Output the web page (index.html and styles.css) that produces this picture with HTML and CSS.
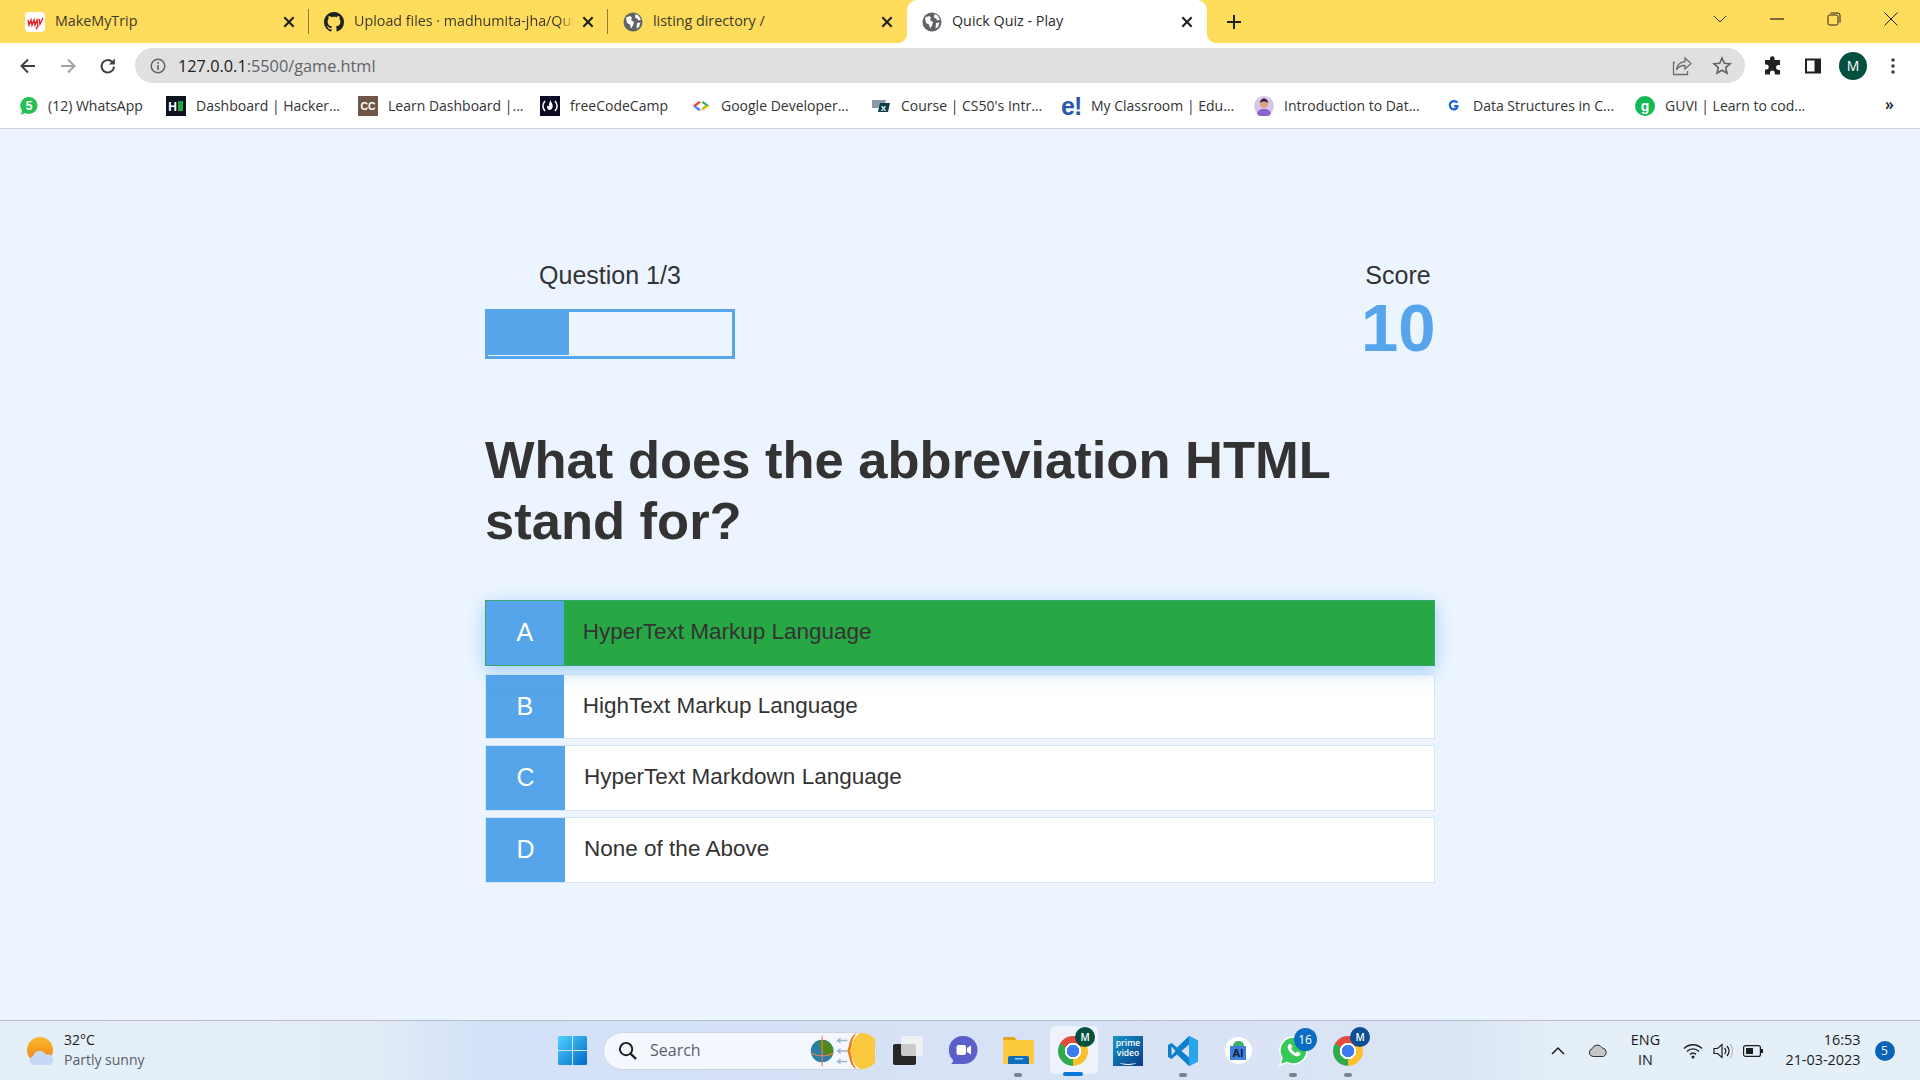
FILE: index.html
```html
<!DOCTYPE html>
<html lang="en">
<head>
  <meta charset="UTF-8" />
  <title>Quick Quiz - Play</title>
  <link rel="stylesheet" href="styles.css">
</head>
<body>
  <svg class="defs" width="0" height="0">
    <symbol id="globe" viewBox="0 0 20 20">
      <circle cx="10" cy="10" r="9.5" fill="#5f6368"/>
      <path d="M3 5.500 7 4l2 1.500-1 2.500 3 2-1 3.500-2 3-1-4-3-1.500zM12.500 2l3 1.500 2.500 4-2.500 1-1.500-2-2-1zM14 11l3.500-.5-1.500 4.500-2.500 1.500z" fill="#fff"/>
    </symbol>
    <symbol id="x" viewBox="0 0 12 12">
      <path d="M2 2l8 8M10 2l-8 8" stroke="#202124" stroke-width="1.800" fill="none"/>
    </symbol>
  </svg>

  <div class="tabstrip">
    <div class="tab">
      <svg class="favicon" viewBox="0 0 20 20"><rect width="20" height="20" rx="4" fill="#fff"/><path d="M3 8l1 5 2-5 1 5 2-5 1 5 2-5 1 6-2 3M14 7l1 5 3-6" stroke="#e5232c" stroke-width="1.400" fill="none"/></svg>
      <span class="tab-title">MakeMyTrip</span>
      <svg class="tab-close"><use href="#x"/></svg>
    </div>
    <div class="tab">
      <svg class="favicon" viewBox="0 0 16 16"><path fill="#202124" d="M8 0C3.580 0 0 3.580 0 8c0 3.540 2.290 6.530 5.470 7.590.4.070.55-.17.55-.38 0-.19-.01-.82-.01-1.490-2.010.37-2.530-.49-2.690-.94-.09-.23-.48-.94-.82-1.130-.28-.15-.68-.52-.01-.53.630-.01 1.080.58 1.230.82.720 1.210 1.870.87 2.330.66.070-.52.280-.87.510-1.070-1.780-.2-3.640-.89-3.640-3.950 0-.87.310-1.590.820-2.150-.08-.2-.36-1.020.08-2.120 0 0 .67-.21 2.200.82.640-.18 1.320-.27 2-.27s1.360.09 2 .27c1.530-1.040 2.200-.82 2.200-.82.440 1.100.16 1.920.08 2.120.51.560.820 1.270.820 2.150 0 3.070-1.870 3.750-3.650 3.950.29.250.54.730.54 1.480 0 1.070-.01 1.930-.01 2.200 0 .21.150.46.550.38A8.010 8.010 0 0 0 16 8c0-4.420-3.580-8-8-8z"/></svg>
      <span class="tab-title tab-fade">Upload files · madhumita-jha/Qui</span>
      <svg class="tab-close"><use href="#x"/></svg>
    </div>
    <div class="tab">
      <svg class="favicon"><use href="#globe"/></svg>
      <span class="tab-title">listing directory /</span>
      <svg class="tab-close"><use href="#x"/></svg>
    </div>
    <div class="tab active">
      <svg class="favicon"><use href="#globe"/></svg>
      <span class="tab-title">Quick Quiz - Play</span>
      <svg class="tab-close"><use href="#x"/></svg>
    </div>
    <svg class="new-tab" viewBox="0 0 16 16"><path d="M8 1v14M1 8h14" stroke="#202124" stroke-width="2"/></svg>
    <div class="window-controls">
      <svg class="win-btn chevron" viewBox="0 0 14 14"><path d="M1 4l6 6 6-6" stroke="#333" fill="none"/></svg>
      <svg class="win-btn" viewBox="0 0 14 14"><path d="M0 7h14" stroke="#222" stroke-width="1.200"/></svg>
      <svg class="win-btn" viewBox="0 0 14 14"><rect x="1" y="3" width="10" height="10" rx="1.500" stroke="#222" fill="none"/><path d="M3.500 1H11a2 2 0 0 1 2 2v7.500" stroke="#222" fill="none"/></svg>
      <svg class="win-btn" viewBox="0 0 14 14"><path d="M.5.5l13 13M13.500.5l-13 13" stroke="#222"/></svg>
    </div>
  </div>

  <div class="toolbar">
    <div class="nav-btn"><svg viewBox="0 0 18 18"><path d="M16 9H3M9 2.500 2.500 9 9 15.500" stroke="#3c4043" stroke-width="2" fill="none"/></svg></div>
    <div class="nav-btn"><svg viewBox="0 0 18 18"><path d="M2 9h13M9 2.500 15.500 9 9 15.500" stroke="#a2a3a5" stroke-width="2" fill="none"/></svg></div>
    <div class="nav-btn"><svg viewBox="0 0 18 18"><path d="M15 9.500a6.200 6.200 0 1 1-1.800-4.600" stroke="#3c4043" stroke-width="2" fill="none"/><path d="M15.800 1.500v6h-6z" fill="#3c4043"/></svg></div>
    <div class="omnibox">
      <svg class="info" viewBox="0 0 16 16"><circle cx="8" cy="8" r="6.800" stroke="#5f6368" stroke-width="1.500" fill="none"/><path d="M8 7v5M8 4v1.800" stroke="#5f6368" stroke-width="1.600"/></svg>
      <span class="url"><b>127.0.0.1</b>:5500/game.html</span>
      <svg class="omni-icon" viewBox="0 0 20 20"><path d="M13 2l6 5.500-6 5.500V9.500C8.500 9.500 6 11 4.500 14c.5-5 3.500-8 8.500-8.500zM3 6.500H1.500v12h14V15" stroke="#6c6e70" stroke-width="1.300" fill="none"/></svg>
      <svg class="omni-icon" viewBox="0 0 20 20"><path d="M10 2l2.300 5.300 5.700.5-4.300 3.800 1.300 5.600L10 14.200l-5 3 1.300-5.600L2 7.800l5.700-.5z" stroke="#5f6368" stroke-width="1.600" fill="none"/></svg>
    </div>
    <div class="nav-btn"><svg viewBox="0 0 20 20"><path fill="#202124" d="M7 2.500a2.300 2.300 0 0 1 4.600 0V4H17v5h-1.500a2.500 2.500 0 0 0 0 5H17v4.500H11.800V17a2.400 2.400 0 0 0-4.800 0v1.500H2V13.500h1.200a2.500 2.500 0 0 0 0-5H2V4h5z"/></svg></div>
    <div class="nav-btn"><svg viewBox="0 0 18 18"><rect x="1" y="1.500" width="16" height="15" fill="#202124"/><rect x="3" y="3.500" width="7.500" height="11" fill="#fff"/></svg></div>
    <div class="nav-btn"><span class="avatar">M</span></div>
    <div class="nav-btn"><svg viewBox="0 0 18 18"><circle cx="9" cy="3" r="1.800" fill="#3c4043"/><circle cx="9" cy="9" r="1.800" fill="#3c4043"/><circle cx="9" cy="15" r="1.800" fill="#3c4043"/></svg></div>
  </div>

  <div class="bookmarks">
    <div class="bookmark"><svg class="wa-icon" viewBox="0 0 18 20"><path d="M9 1a8.500 8.500 0 0 1 0 17c-1.500 0-2.900-.4-4-1L.8 19l1.400-4.200A8.500 8.500 0 0 1 9 1z" fill="#25c253"/><text x="9" y="14" class="fav-text" fill="#fff" font-size="12">5</text></svg><span>(12) WhatsApp</span></div>
    <div class="bookmark"><svg viewBox="0 0 20 20"><rect width="20" height="20" fill="#0e141e"/><text x="6.500" y="14.500" class="fav-text" fill="#fff" font-size="12">H</text><rect x="12" y="5" width="5" height="10" fill="#1ba94c"/></svg><span>Dashboard | Hacker...</span></div>
    <div class="bookmark"><svg viewBox="0 0 20 20"><rect width="20" height="20" fill="#6f5646"/><text x="10" y="14" class="fav-text" fill="#fff" font-size="10.500">CC</text></svg><span>Learn Dashboard |...</span></div>
    <div class="bookmark"><svg viewBox="0 0 20 20"><rect width="20" height="20" fill="#0a0a23"/><path d="M5 5c-2.500 3-2.500 7 0 10M15 5c2.500 3 2.500 7 0 10" stroke="#fff" stroke-width="1.500" fill="none"/><path d="M10.500 4c.5 3 3 4 2 7.500-.5 1.500-1.500 2-2.500 2.500-2 0-3.500-2-2.700-4.500.5 1 1.200 1 1.500.5.500-1.500.5-4 1.700-6z" fill="#fff"/></svg><span>freeCodeCamp</span></div>
    <div class="bookmark"><svg viewBox="0 0 20 20"><path d="M8 5 2 9.500l2 1.500L10 6.500z" fill="#ea4335"/><path d="M2 10.500 8 15l2-1.500-4-3z" fill="#4285f4"/><path d="M12 5l6 4.500-6 4.500-1.500-1.500 4-3-4-3z" fill="#34a853"/><path d="M18 10l-6 4.500-1.500-1.500 5-3.500z" fill="#fbbc04"/></svg><span>Google Developer...</span></div>
    <div class="bookmark"><svg viewBox="0 0 20 20"><path d="M1 4h14l-2 8H1z" fill="#8c9aa6"/><path d="M9 7h10l-2 9H7z" fill="#0d3b46"/><text x="12.500" y="15" class="fav-text" fill="#fff" font-size="8">X</text></svg><span>Course | CS50's Intr...</span></div>
    <div class="bookmark"><b class="edu-logo">e!</b><span>My Classroom | Edu...</span></div>
    <div class="bookmark"><svg viewBox="0 0 20 20"><circle cx="10" cy="10" r="10" fill="#d5c5e8"/><path d="M3 18c1-4 3-5 7-5s6 1 7 5a10 10 0 0 1-14 0z" fill="#8a63d2"/><circle cx="10" cy="8" r="4" fill="#d9a184"/><path d="M6 7c0-6 8-6 8 0-2-2-6-2-8 0z" fill="#2c2230"/></svg><span>Introduction to Dat...</span></div>
    <div class="bookmark"><svg class="g-icon" viewBox="0 0 20 20"><path d="M16 5.500C13 2 7 2.500 5 6.500c-2 4 .500 9.500 5.500 9.500 3 0 5-1.500 5.500-5h-5" stroke="#1a62d6" stroke-width="3.500" fill="none"/></svg><span>Data Structures in C...</span></div>
    <div class="bookmark"><svg viewBox="0 0 20 20"><circle cx="10" cy="10" r="10" fill="#13b955"/><text x="10" y="15" class="fav-text" fill="#fff" font-size="14">g</text></svg><span>GUVI | Learn to cod...</span></div>
    <div class="more">»</div>
  </div>

  <main class="page">
    <div class="game">
      <div class="hud">
        <div class="hud-question">
          <p class="hud-label">Question 1/3</p>
          <div class="progress"><div class="progress-fill"></div></div>
        </div>
        <div class="hud-score">
          <p class="hud-label">Score</p>
          <p class="score">10</p>
        </div>
      </div>
      <h1 class="question">What does the abbreviation HTML stand for?</h1>
      <div class="choice correct"><span class="prefix">A</span><span class="choice-text">HyperText Markup Language</span></div>
      <div class="choice second"><span class="prefix">B</span><span class="choice-text">HighText Markup Language</span></div>
      <div class="choice"><span class="prefix">C</span><span class="choice-text">HyperText Markdown Language</span></div>
      <div class="choice"><span class="prefix">D</span><span class="choice-text">None of the Above</span></div>
    </div>
  </main>

  <footer class="taskbar">
    <div class="weather">
      <svg class="weather-icon" viewBox="0 0 28 28"><defs><linearGradient id="sun" x1="0" y1="0" x2="0" y2="1"><stop offset="0" stop-color="#fdb92e"/><stop offset="1" stop-color="#ee7f14"/></linearGradient></defs><circle cx="13" cy="13" r="13" fill="url(#sun)"/><path d="M7 28a4.500 4.500 0 0 1-1-8.800 7 7 0 0 1 13-1.500 5.200 5.200 0 0 1 4 10.300z" fill="#c5d8f5"/></svg>
      <div class="weather-text"><span class="temp">32°C</span><span class="sky">Partly sunny</span></div>
    </div>
    <div class="dock">
      <div class="slot">
        <svg width="29" height="29" viewBox="0 0 29 29"><defs><linearGradient id="win" x1="0" y1="0" x2="1" y2="1"><stop offset="0" stop-color="#4fd2ff"/><stop offset="1" stop-color="#0069c8"/></linearGradient></defs><path fill="url(#win)" d="M0 1.500A1.500 1.500 0 0 1 1.500 0H14v14H0zM15 0h12.500A1.500 1.500 0 0 1 29 1.500V14H15zM0 15h14v14H1.500A1.500 1.500 0 0 1 0 27.500zM15 15h14v12.500a1.500 1.500 0 0 1-1.500 1.500H15z"/></svg>
      </div>
      <div class="search">
        <svg class="search-icon" viewBox="0 0 20 20"><circle cx="8.500" cy="8.500" r="6.500" stroke="#1c1c1c" stroke-width="2" fill="none"/><path d="M13.500 13.500 19 19" stroke="#1c1c1c" stroke-width="2.400"/></svg>
        <span class="search-text">Search</span>
        <svg class="search-art" viewBox="0 0 68 38"><circle cx="12.500" cy="19" r="12" fill="#2a7fa8"/><path d="M10 8c6-2 12 2 14 9 1 4-2 9-5 8-2-3-6-2-7-6-1-3-4-6-2-11z" fill="#4c8a1e"/><path d="M12.500 3v32M.5 21c7 4 17 4 24 0" stroke="#ef7a5a" stroke-width="1.200" fill="none"/><path d="M39 8H29l3-2.500M29 8l3 2.500M39 19H29l3-2.500M29 19l3 2.500M39 30H29l3-2.500M29 30l3 2.500" stroke="#9bb4cc" stroke-width="1.500" fill="none"/><path d="M54 0a19 19 0 0 1 0 38c-4 0-9-6-10-14l-2-5 2-5c1-8 6-14 10-14z" fill="#fcc93e"/><path d="M49 0c-3 3-5 8-5.500 14L42 19l1.500 5c.5 6 2.500 11 5.500 14-5-2-7-7-8-13l-2-6 2-6c1-6 3-11 8-13z" fill="#ec7c14"/></svg>
      </div>
      <div class="slot">
        <svg width="30" height="29" viewBox="0 0 30 29"><rect y="8" width="23" height="21" rx="2" fill="#262626"/><rect x="8" y="0" width="22" height="20" rx="2" fill="#f4f4f4" fill-opacity=".8"/></svg>
      </div>
      <div class="slot">
        <svg width="29" height="29" viewBox="0 0 29 29"><path d="M14.500 0a14 14 0 0 1 0 28H2c1.500-1 2.500-2.500 2-4A14 14 0 0 1 14.500 0z" fill="#5b5fc7"/><rect x="7.500" y="9" width="9.500" height="10" rx="2" fill="#fff"/><path d="M18 12l4-2.500v9L18 16z" fill="#fff"/></svg>
      </div>
      <div class="slot running">
        <svg width="31" height="27" viewBox="0 0 31 27"><path d="M0 2a2 2 0 0 1 2-2h9l3 3H0z" fill="#e3a516"/><rect y="3" width="31" height="24" rx="2" fill="#fdc93d"/><path d="M5 27v-6a2 2 0 0 1 2-2h17a2 2 0 0 1 2 2v6z" fill="#0f6cbd"/><rect x="12" y="21" width="8" height="1.500" fill="#8fd0f5"/></svg>
      </div>
      <div class="slot active-app">
        <div class="chrome"><span class="chrome-badge">M</span></div>
      </div>
      <div class="slot">
        <div class="prime"><span>prime</span><span>video</span><i class="prime-smile"></i></div>
      </div>
      <div class="slot running">
        <svg width="30" height="30" viewBox="0 0 30 30"><path d="M21 0l9 4.500v21L21 30 9 18.500 3.500 23 0 21V9l3.500-2L9 11.500z" fill="#0f7fcc"/><path d="M21 0l9 4.500v21L21 30z" fill="#28a5ec"/><path d="M21 8.500l-7.500 6.500 7.500 6.500z" fill="#d8e2f5"/><path d="M3.500 10.500 7.500 15l-4 4.500z" fill="#d8e2f5"/></svg>
      </div>
      <div class="slot">
        <div class="ai-app"><span class="ai-box">AI</span></div>
      </div>
      <div class="slot running">
        <div class="wa-wrap">
          <svg width="29" height="30" viewBox="0 0 29 30"><path d="M14.500 1a13.500 13.500 0 0 1 0 27c-2.300 0-4.500-.6-6.300-1.600L1 29l2-7.300A13.500 13.500 0 0 1 14.500 1z" fill="#38c759" stroke="#fff" stroke-width="1.500"/><path d="M10 8c-2 2-1.500 5 1 8s6 5 8.500 4c1.500-.5 2.500-2.500 2-3l-3-1.500-1.500 1.500c-2-.5-4-2.500-5-5l1.500-1.500L11.500 8z" fill="#fff"/></svg>
          <span class="wa-badge">16</span>
        </div>
      </div>
      <div class="slot running">
        <div class="chrome"><span class="chrome-badge blue">M</span></div>
      </div>
    </div>
    <div class="tray">
      <svg class="tray-chevron" viewBox="0 0 14 9"><path d="M1 8l6-6 6 6" stroke="#1c1c1c" stroke-width="1.500" fill="none"/></svg>
      <svg class="tray-cloud" viewBox="0 0 20 13"><path d="M5 12.500a4 4 0 0 1-.8-7.800 5.500 5.500 0 0 1 10-.8 4.500 4.500 0 0 1 1.300 8.600z" fill="#c4c6c8" stroke="#333" stroke-width="1"/></svg>
      <div class="lang"><span>ENG</span><span>IN</span></div>
      <svg class="tray-wifi" viewBox="0 0 20 16"><path d="M1 5.500c5-5 13-5 18 0M4 8.500c3.500-3.500 8.500-3.500 12 0M7 11.500c1.800-1.800 4.200-1.800 6 0" stroke="#1c1c1c" stroke-width="1.300" fill="none"/><circle cx="10" cy="14" r="1.500" fill="#1c1c1c"/></svg>
      <svg class="tray-sound" viewBox="0 0 20 16"><path d="M1 5.500h3.500L9 1.500v13l-4.500-4H1z" stroke="#1c1c1c" stroke-width="1.200" fill="none"/><path d="M11.500 5c1.500 1.700 1.500 4.300 0 6M14 3c2.500 3 2.500 7 0 10" stroke="#1c1c1c" stroke-width="1.200" fill="none"/><path d="M17 1c3.500 4 3.500 10 0 14" stroke="#b8bec6" stroke-width="1.200" fill="none"/></svg>
      <svg class="tray-battery" viewBox="0 0 20 12"><rect x=".6" y=".6" width="16.800" height="10.800" rx="2" stroke="#1c1c1c" stroke-width="1.200" fill="none"/><rect x="3" y="3" width="7" height="6" fill="#1c1c1c"/><rect x="18" y="4" width="2" height="4" fill="#1c1c1c"/></svg>
      <div class="clock"><span>16:53</span><span>21-03-2023</span></div>
      <span class="notify">5</span>
    </div>
  </footer>
</body>
</html>
```

FILE: styles.css
```css
* {
  box-sizing: border-box;
}
html, body {
  height: 100%;
}
body {
  margin: 0;
  display: flex;
  flex-direction: column;
  height: 1080px;
  overflow: hidden;
  font-family: "Liberation Sans", Arial, sans-serif;
  background: #ecf5ff;
}
.defs {
  position: absolute;
}
svg {
  display: block;
}
.fav-text {
  font-family: "Liberation Sans", Arial, sans-serif;
  font-weight: bold;
  text-anchor: middle;
}

/* browser tabs */
.tabstrip {
  flex: none;
  height: 43px;
  display: flex;
  align-items: center;
  padding-left: 10px;
  background: #ffdc5b;
  font-family: "Open Sans", sans-serif;
}
.tab {
  position: relative;
  width: 299px;
  height: 43px;
  display: flex;
  align-items: center;
  padding: 0 13px 0 15px;
  font-size: 14.300px;
  color: #3c3a2c;
}
.tab + .tab::before {
  content: "";
  position: absolute;
  left: -1px;
  top: 9px;
  height: 25px;
  border-left: 1px solid #8e7e3e;
}
.tab .favicon {
  flex: none;
  width: 20px;
  height: 20px;
  margin-right: 10px;
}
.tab-title {
  flex: 1;
  white-space: nowrap;
  overflow: hidden;
  margin-top: -2px;
}
.tab-fade {
  -webkit-mask-image: linear-gradient(to right, #000 93%, transparent);
  mask-image: linear-gradient(to right, #000 93%, transparent);
}
.tab-close {
  flex: none;
  width: 14px;
  height: 14px;
  margin-left: 7px;
}
.tab.active {
  width: 300px;
  background: #fff;
  border-radius: 10px 10px 0 0;
  color: #2a2a2a;
}
.tab.active::before {
  display: none;
}
.tab.active::after {
  content: "";
  position: absolute;
  left: -10px;
  right: -10px;
  bottom: 0;
  height: 10px;
  z-index: 0;
  background:
    radial-gradient(circle at 0 0, #ffdc5b 10px, #fff 10.500px) left / 10px 10px no-repeat,
    radial-gradient(circle at 100% 0, #ffdc5b 10px, #fff 10.500px) right / 10px 10px no-repeat;
}
.new-tab {
  width: 16px;
  height: 16px;
  margin-left: 19px;
}
.window-controls {
  margin-left: auto;
  display: flex;
  align-items: center;
  height: 100%;
  padding-right: 22px;
  padding-bottom: 6px;
}
.win-btn {
  width: 14px;
  height: 14px;
  margin-left: 43px;
}

/* address bar */
.toolbar {
  flex: none;
  height: 43px;
  display: flex;
  align-items: center;
  padding-left: 8px;
  padding-top: 2px;
  background: #fff;
}
.nav-btn {
  flex: none;
  width: 40px;
  height: 36px;
  display: flex;
  align-items: center;
  justify-content: center;
}
.nav-btn svg {
  width: 18px;
  height: 18px;
}
.nav-btn:nth-child(5) svg {
  width: 20px;
  height: 20px;
}
.omnibox {
  flex: none;
  width: 1610px;
  height: 35px;
  margin: 0 8px 0 7px;
  display: flex;
  align-items: center;
  padding: 0 13px 0 15px;
  border-radius: 18px;
  background: #e0e0e0;
}
.info {
  width: 16px;
  height: 16px;
  margin-right: 12px;
}
.url {
  flex: 1;
  font: 16.300px "Open Sans", sans-serif;
  color: #5f6368;
}
.url b {
  font-weight: normal;
  color: #202124;
}
.omni-icon {
  width: 20px;
  height: 20px;
  margin-left: 20px;
}
.avatar {
  width: 28px;
  height: 28px;
  border-radius: 50%;
  background: #03503e;
  color: #fff;
  font: 14px/28px "Open Sans", sans-serif;
  text-align: center;
}

/* bookmarks */
.bookmarks {
  flex: none;
  height: 43px;
  display: grid;
  grid-template-columns: 146px 192px 182px 151px 180px 190px 193px 193px 188px 250px 1fr;
  align-items: center;
  padding-left: 20px;
  padding-bottom: 3px;
  background: #fff;
  border-bottom: 1px solid #cdd5dc;
  font: 14px "Open Sans", sans-serif;
  color: #333;
}
.bookmark {
  display: flex;
  align-items: center;
  white-space: nowrap;
}
.bookmark svg {
  flex: none;
  width: 20px;
  height: 20px;
  margin-right: 10px;
}
.bookmark .wa-icon {
  width: 18px;
}
.bookmark .g-icon {
  width: 13px;
  height: 13px;
  margin-right: 13px;
}
.edu-logo {
  flex: none;
  width: 21px;
  margin-right: 9px;
  font: bold 25px/20px "Liberation Sans", sans-serif;
  letter-spacing: -1px;
  color: #2a5aa6;
}
.more {
  font-size: 16px;
  font-weight: 600;
  color: #202124;
  line-height: 1;
  margin-top: -4px;
}

/* quiz */
.page {
  flex: 1;
  padding-top: 131px;
}
.game {
  width: 950px;
  margin: 0 auto;
}
.hud {
  display: flex;
  justify-content: space-between;
  height: 71px;
}
.hud-label {
  margin: 0;
  font-size: 25px;
  line-height: 30px;
  color: #333;
  text-align: center;
}
.hud-question {
  width: 250px;
  height: 99px;
}
.progress {
  height: 50px;
  margin-top: 19px;
  border: 3px solid #56a5eb;
}
.progress-fill {
  width: 33.300%;
  height: 43px;
  background: #56a5eb;
}
.hud-score {
  width: 74px;
  height: 99px;
}
.score {
  margin: 0;
  font-size: 67px;
  font-weight: bold;
  line-height: 76px;
  text-align: center;
  color: #56a5eb;
}
.question {
  margin: 98px 0 50px;
  font-size: 52.500px;
  line-height: 61px;
  font-weight: bold;
  color: #333;
}
.choice {
  display: flex;
  height: 66px;
  margin-bottom: 6px;
  border: 1px solid rgba(86, 165, 235, 0.25);
  background: #fff;
  font-size: 22.500px;
  color: #333;
}
.choice.second {
  height: 65px;
  margin-top: 7px;
}
.prefix {
  display: flex;
  align-items: center;
  padding: 0 30.500px 1px;
  background: #56a5eb;
  color: #fff;
  font-size: 25px;
}
.choice-text {
  display: flex;
  align-items: center;
  padding: 0 0 2px 19px;
}
.choice.correct {
  background: #28a745;
  transform: translateY(-1px);
  box-shadow: 0 5px 17px rgba(86, 165, 235, 0.5);
  position: relative;
}

/* windows taskbar */
.taskbar {
  flex: none;
  height: 60px;
  display: flex;
  align-items: center;
  border-top: 1px solid #b5bcc8;
  background: linear-gradient(to right, #e4eff7 0, #e2edf7 370px, #d4e1f8 480px, #d8e2f5 1100px, #dae5f5 1450px, #e4eff8 1560px);
  font-family: "Open Sans", sans-serif;
}
.weather {
  flex: none;
  width: 544.500px;
  display: flex;
  align-items: center;
  padding-left: 27px;
}
.weather-icon {
  width: 28px;
  height: 28px;
  margin-right: 9px;
}
.weather-text {
  display: flex;
  flex-direction: column;
  margin-top: -2px;
  font-size: 14px;
  line-height: 20px;
  color: #1b1b1b;
}
.sky {
  color: #5a6068;
}
.dock {
  flex: none;
  display: flex;
  align-items: center;
}
.slot {
  position: relative;
  width: 55px;
  height: 59px;
  display: flex;
  align-items: center;
  justify-content: center;
}
.slot.running::after {
  content: "";
  position: absolute;
  left: 50%;
  bottom: 3px;
  width: 8px;
  height: 4px;
  margin-left: -4px;
  border-radius: 2px;
  background: #7b838c;
}
.search {
  width: 274px;
  height: 38px;
  margin: 0 3.500px;
  display: flex;
  align-items: center;
  padding: 0 1px 0 14px;
  border-radius: 19px;
  background: #f4f8fe;
  border: 1px solid #c9d4e4;
}
.search-icon {
  width: 19px;
  height: 19px;
  margin-right: 13px;
}
.search-text {
  flex: 1;
  margin-top: -2px;
  font-size: 16px;
  color: #5c5f64;
}
.search-art {
  width: 65px;
  height: 36px;
}
.active-app::before {
  content: "";
  position: absolute;
  left: 4px;
  top: 5px;
  width: 48px;
  height: 48px;
  border-radius: 5px;
  background: #edf2fb;
}
.active-app::after {
  content: "";
  position: absolute;
  left: 50%;
  bottom: 4px;
  width: 20px;
  height: 4px;
  margin-left: -10px;
  border-radius: 2px;
  background: #0a78d8;
}
.chrome {
  position: relative;
  width: 30px;
  height: 30px;
  border-radius: 50%;
  background:
    radial-gradient(circle, #3b7df0 0 6px, #fff 6.500px 8px, transparent 8.500px),
    conic-gradient(#e64a3b 0 60deg, #fbc02d 60deg 180deg, #2faa4e 180deg 300deg, #e64a3b 300deg);
}
.chrome-badge {
  position: absolute;
  right: -7px;
  top: -9px;
  width: 20px;
  height: 20px;
  border-radius: 50%;
  background: #03503e;
  color: #fff;
  font-size: 10px;
  font-weight: 600;
  line-height: 20px;
  text-align: center;
}
.chrome-badge.blue {
  background: #0b4f95;
}
.prime {
  position: relative;
  width: 30px;
  height: 30px;
  display: flex;
  flex-direction: column;
  align-items: center;
  padding-top: 2px;
  background: linear-gradient(135deg, #1399c9, #0c3a86);
  color: #fff;
  font-size: 8.500px;
  font-weight: 600;
  line-height: 10px;
}
.prime-smile {
  position: absolute;
  left: 7px;
  bottom: 1px;
  width: 16px;
  height: 5px;
  border-bottom: 1.500px solid #fff;
  border-radius: 0 0 50% 50%;
}
.ai-app {
  position: relative;
  width: 27px;
  height: 27px;
  display: flex;
  align-items: flex-end;
  justify-content: center;
  padding-bottom: 4px;
  border-radius: 50%;
  background: #fff;
}
.ai-app::before {
  content: "";
  position: absolute;
  left: 8px;
  top: 4px;
  width: 11px;
  height: 5px;
  border-radius: 5px 5px 0 0;
  background: #3fae6a;
}
.ai-box {
  width: 16px;
  height: 14px;
  background: #3f7fe0;
  color: #10203a;
  font-size: 11px;
  font-weight: 700;
  line-height: 14px;
  text-align: center;
}
.wa-wrap {
  position: relative;
}
.wa-badge {
  position: absolute;
  right: -9px;
  top: -8px;
  width: 23px;
  height: 23px;
  border-radius: 50%;
  background: #0b6cc4;
  color: #fff;
  font-size: 12px;
  line-height: 23px;
  text-align: center;
}
.tray {
  flex: 1;
  display: flex;
  align-items: center;
  color: #1b1b1b;
  padding-left: 175px;
  font-size: 14.400px;
}
.tray-chevron {
  width: 14px;
  height: 9px;
}
.tray-cloud {
  width: 20px;
  height: 13px;
  margin-left: 23px;
}
.lang {
  width: 44px;
  margin-left: 16px;
  margin-top: -2px;
  display: flex;
  flex-direction: column;
  align-items: center;
  line-height: 20px;
}
.tray-wifi {
  width: 20px;
  height: 16px;
  margin-left: 15px;
}
.tray-sound {
  width: 20px;
  height: 16px;
  margin-left: 10px;
}
.tray-battery {
  width: 20px;
  height: 12px;
  margin-left: 10px;
}
.clock {
  width: 90px;
  display: flex;
  flex-direction: column;
  align-items: flex-end;
  margin-left: 8px;
  margin-top: -2px;
  line-height: 20px;
}
.notify {
  width: 20px;
  height: 20px;
  margin-left: 14px;
  border-radius: 50%;
  background: #0b63b8;
  color: #fff;
  font-size: 12px;
  line-height: 20px;
  text-align: center;
}
```
